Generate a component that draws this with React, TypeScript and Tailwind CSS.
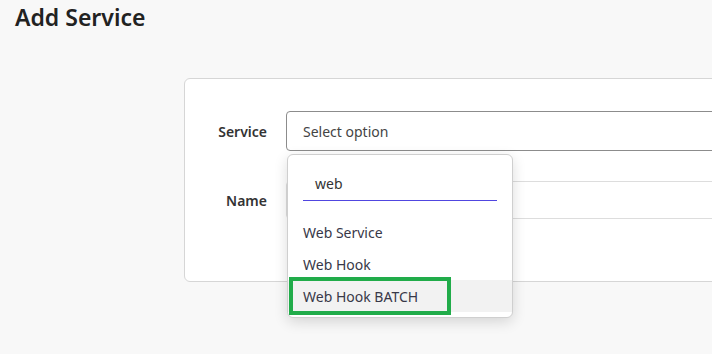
import React from 'react';

const options = ['Web Service', 'Web Hook', 'Web Hook BATCH'];

const App: React.FC = () => {
  return (
    <div
      className="h-screen w-full overflow-hidden bg-[#f8f8f8] text-[#333]"
      style={{ fontFamily: '"Noto Sans", "Open Sans", sans-serif' }}
    >
      <h1 className="px-[15px] pt-[2px] text-[23px] font-semibold leading-[30px] text-[#222]">Add Service</h1>

      <div className="ml-[184px] mt-[46px] w-[600px] rounded-[6px] border border-[#d6d6d6] bg-white pt-[32px] pb-[62px]">
        {/* Service row */}
        <div className="flex items-center">
          <label className="w-[82px] shrink-0 text-right text-[14px] font-semibold text-[#333]">Service</label>
          <div className="relative ml-[19px] flex-1">
            <div className="flex h-[40px] items-center rounded-[4px] border border-[#8c8c8c] px-[16px] text-[14px] text-[#444]">
              Select option
            </div>

            {/* Dropdown */}
            <div className="absolute left-[1px] top-[43px] z-10 w-[226px] rounded-[6px] border border-[#cfcfcf] bg-white pb-[5px] shadow-[0_4px_14px_rgba(0,0,0,0.14)]">
              <div className="px-[15px] pt-[12px] pb-[15px]">
                <div className="flex h-[34px] items-center border-b border-[#5046e0] px-[12px] text-[14px] text-[#333]">
                  web
                </div>
              </div>
              {options.map((o, i) => (
                <div
                  key={o}
                  className={`flex h-[32px] items-center px-[15px] text-[14px] text-[#383848] ${i === 2 ? 'bg-[#f2f2f2]' : ''}`}
                >
                  {o}
                </div>
              ))}

              {/* highlight annotation */}
              <div className="pointer-events-none absolute left-[1px] top-[122px] h-[38px] w-[162px] border-[4px] border-[#21ac4a]" />
            </div>
          </div>
        </div>

        {/* Name row */}
        <div className="mt-[30px] flex items-center">
          <label className="w-[82px] shrink-0 text-right text-[14px] font-semibold text-[#333]">Name</label>
          <div className="ml-[19px] h-[38px] flex-1 rounded-[4px] border border-[#dddddd]" />
        </div>
      </div>
    </div>
  );
};

export default App;
